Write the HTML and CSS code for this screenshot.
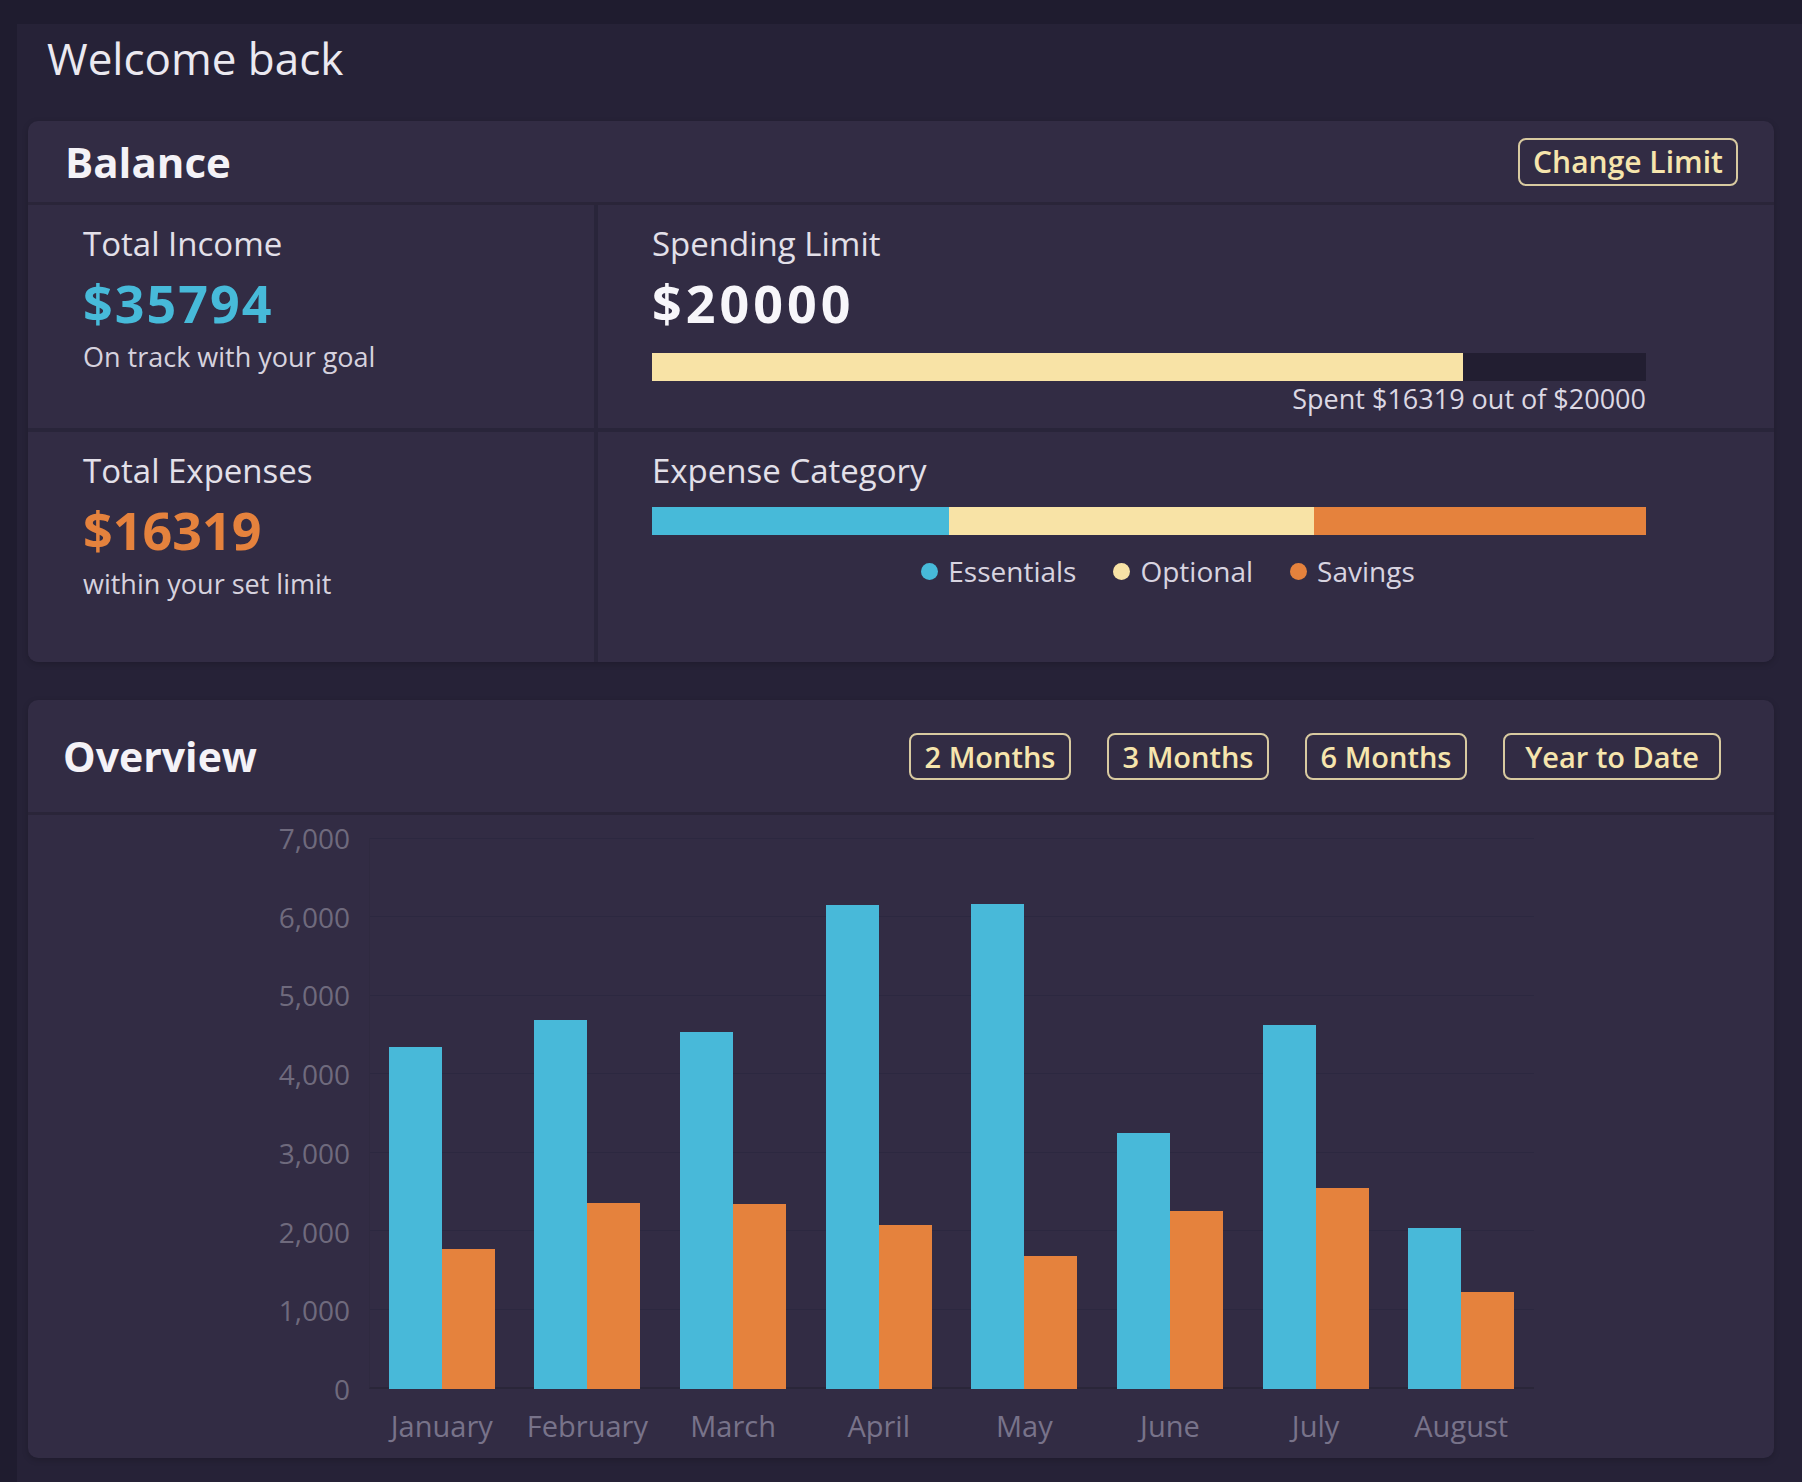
FILE: index.html
```html
<!DOCTYPE html>
<html lang="en">
<head>
<meta charset="utf-8">
<title>Dashboard</title>
<link rel="stylesheet" href="styles.css">
</head>
<body>
<div class="frame">
  <main class="main">
    <h1 class="welcome">Welcome back</h1>

    <section class="card balance">
      <header class="card-head">
        <h2 class="card-title">Balance</h2>
        <button class="btn btn-limit">Change Limit</button>
      </header>
      <div class="balance-grid">
        <div class="cell cell-left">
          <div class="label">Total Income</div>
          <div class="amount amount-income">$35794</div>
          <div class="sub">On track with your goal</div>
        </div>
        <div class="cell cell-right">
          <div class="label">Spending Limit</div>
          <div class="amount amount-limit">$20000</div>
          <div class="track"><div class="track-fill" style="width:81.6%"></div></div>
          <div class="spent">Spent $16319 out of $20000</div>
        </div>
        <div class="cell cell-left">
          <div class="label">Total Expenses</div>
          <div class="amount amount-expense">$16319</div>
          <div class="sub">within your set limit</div>
        </div>
        <div class="cell cell-right">
          <div class="label">Expense Category</div>
          <div class="catbar">
            <div class="seg seg-ess" style="width:29.9%"></div>
            <div class="seg seg-opt" style="width:36.7%"></div>
            <div class="seg seg-sav" style="width:33.4%"></div>
          </div>
          <ul class="legend">
            <li class="legend-item"><span class="dot dot-ess"></span>Essentials</li>
            <li class="legend-item"><span class="dot dot-opt"></span>Optional</li>
            <li class="legend-item"><span class="dot dot-sav"></span>Savings</li>
          </ul>
        </div>
      </div>
    </section>

    <section class="card overview">
      <header class="card-head overview-head">
        <h2 class="card-title">Overview</h2>
        <div class="ranges">
          <button class="btn btn-range">2 Months</button>
          <button class="btn btn-range">3 Months</button>
          <button class="btn btn-range">6 Months</button>
          <button class="btn btn-range btn-ytd">Year to Date</button>
        </div>
      </header>
      <div class="chart">
        <div class="yaxis">
          <span>7,000</span><span>6,000</span><span>5,000</span><span>4,000</span>
          <span>3,000</span><span>2,000</span><span>1,000</span><span>0</span>
        </div>
        <div class="plot">
          <div class="gridlines">
            <div class="gl"></div><div class="gl"></div><div class="gl"></div><div class="gl"></div>
            <div class="gl"></div><div class="gl"></div><div class="gl"></div>
          </div>
          <div class="bars">
            <div class="group"><div class="bar bar-in" style="height:62.14%"></div><div class="bar bar-out" style="height:25.49%"></div></div>
            <div class="group"><div class="bar bar-in" style="height:67.0%"></div><div class="bar bar-out" style="height:33.76%"></div></div>
            <div class="group"><div class="bar bar-in" style="height:64.71%"></div><div class="bar bar-out" style="height:33.57%"></div></div>
            <div class="group"><div class="bar bar-in" style="height:87.86%"></div><div class="bar bar-out" style="height:29.77%"></div></div>
            <div class="group"><div class="bar bar-in" style="height:88.0%"></div><div class="bar bar-out" style="height:24.14%"></div></div>
            <div class="group"><div class="bar bar-in" style="height:46.43%"></div><div class="bar bar-out" style="height:32.31%"></div></div>
            <div class="group"><div class="bar bar-in" style="height:66.0%"></div><div class="bar bar-out" style="height:36.49%"></div></div>
            <div class="group"><div class="bar bar-in" style="height:29.2%"></div><div class="bar bar-out" style="height:17.6%"></div></div>
          </div>
        </div>
        <div class="xaxis">
          <span>January</span><span>February</span><span>March</span><span>April</span>
          <span>May</span><span>June</span><span>July</span><span>August</span>
        </div>
      </div>
    </section>
  </main>
</div>
</body>
</html>
```

FILE: styles.css
```css
* { box-sizing: border-box; }

html, body {
  margin: 0;
  padding: 0;
  background: #1f1c2f;
  font-family: "Open Sans", "Noto Sans", sans-serif;
  color: #e4e1ea;
}

.frame {
  width: 1802px;
  height: 1482px;
  padding: 24px 0 0 17px;
  overflow: hidden;
}

.main {
  height: 100%;
  background: #262237;
  padding: 4px 28px 0 11px;
}

.welcome {
  margin: 0 0 33px 19px;
  font-size: 44px;
  line-height: 60px;
  font-weight: 400;
  color: #ebe9f0;
}

.card {
  background: #322c44;
  border-radius: 10px;
  overflow: hidden;
  box-shadow: 0 2px 6px rgba(0, 0, 0, 0.18);
}

.card-head {
  display: flex;
  align-items: center;
  justify-content: space-between;
  height: 84px;
  padding: 0 36px 0 37px;
  border-bottom: 3px solid #2a2539;
}

.card-title {
  margin: 0;
  font-size: 42px;
  line-height: 1;
  font-weight: 700;
  color: #f4f2f7;
}

.btn {
  font-family: inherit;
  background: transparent;
  border: 2px solid #d8caa0;
  border-radius: 8px;
  color: #f6e5ad;
  font-weight: 600;
  cursor: pointer;
  display: flex;
  align-items: center;
  justify-content: center;
}

.btn-limit {
  width: 220px;
  height: 48px;
  font-size: 30px;
  padding: 0;
}

.balance-grid {
  display: grid;
  grid-template-columns: 566px 1fr;
  grid-template-rows: 223px 230px;
  gap: 4px;
  background: #29253a;
}

.cell {
  background: #322c44;
  padding-top: 17px;
}

.cell-left { padding-left: 55px; }
.cell-right { padding-left: 54px; padding-right: 128px; }

.label {
  font-size: 33px;
  line-height: 44px;
  color: #e3e0e9;
}

.amount {
  margin-top: 8px;
  font-size: 52px;
  line-height: 58px;
  font-weight: 700;
  letter-spacing: 2px;
}

.amount-income { color: #47bad9; }
.amount-expense { color: #e5823d; letter-spacing: 0; }
.amount-limit { color: #f7f6fa; letter-spacing: 4px; }

.sub {
  margin-top: 7px;
  font-size: 27px;
  line-height: 36px;
  color: #d6d2de;
}

.track {
  margin-top: 21px;
  height: 28px;
  background: #221e31;
}

.track-fill {
  height: 100%;
  background: #f8e3a6;
}

.spent {
  text-align: right;
  font-size: 27px;
  line-height: 36px;
  color: #dcd8e3;
}

.catbar {
  margin-top: 14px;
  height: 28px;
  display: flex;
}

.seg { height: 100%; }
.seg-ess { background: #47bad9; }
.seg-opt { background: #f8e3a6; }
.seg-sav { background: #e5823d; }

.legend {
  list-style: none;
  margin: 18px 0 0;
  padding: 0 0 0 38px;
  display: flex;
  justify-content: center;
  gap: 37px;
}

.legend-item {
  display: flex;
  align-items: center;
  gap: 10px;
  font-size: 28px;
  line-height: 36px;
  color: #d8d4e0;
}

.dot {
  width: 17px;
  height: 17px;
  border-radius: 50%;
}

.dot-ess { background: #47bad9; }
.dot-opt { background: #f8e3a6; }
.dot-sav { background: #e5823d; }

.overview { margin-top: 38px; }

.overview-head {
  height: 115px;
  padding: 0 53px 0 35px;
}

.overview-head .card-title { font-size: 41px; }

.ranges {
  display: flex;
  gap: 36px;
}

.btn-range {
  height: 47px;
  width: 162px;
  padding: 0;
  font-size: 29px;
}

.btn-ytd { width: 218px; }

.chart {
  display: grid;
  grid-template-columns: 122px 1165px;
  grid-template-rows: 551px auto;
  column-gap: 19px;
  padding: 23px 240px 14px 200px;
}

.yaxis {
  grid-column: 1;
  grid-row: 1;
  margin: -20px 0;
  display: flex;
  flex-direction: column;
  justify-content: space-between;
  align-items: flex-end;
  font-size: 28px;
  color: #6f6a7d;
}

.yaxis span {
  height: 40px;
  line-height: 40px;
}

.plot {
  grid-column: 2;
  grid-row: 1;
  display: grid;
  grid-template-rows: 551px;
  height: 551px;
}

.gridlines,
.bars {
  grid-area: 1 / 1;
}

.gridlines {
  display: flex;
  flex-direction: column;
  border-left: 1px solid #2f2a40;
  border-bottom: 2px solid #2a2639;
}

.gl {
  flex: 1;
  border-top: 1px solid #2c2840;
}

.bars {
  display: flex;
  height: 100%;
}

.group {
  flex: 1;
  height: 100%;
  display: flex;
  align-items: flex-end;
  justify-content: center;
}

.bar { width: 53px; }
.bar-in { background: #48b9d9; }
.bar-out { background: #e5823d; }

.xaxis {
  grid-column: 2;
  grid-row: 2;
  margin-top: 19px;
  display: flex;
}

.xaxis span {
  flex: 1;
  text-align: center;
  font-size: 29px;
  line-height: 36px;
  color: #78738a;
}
```
